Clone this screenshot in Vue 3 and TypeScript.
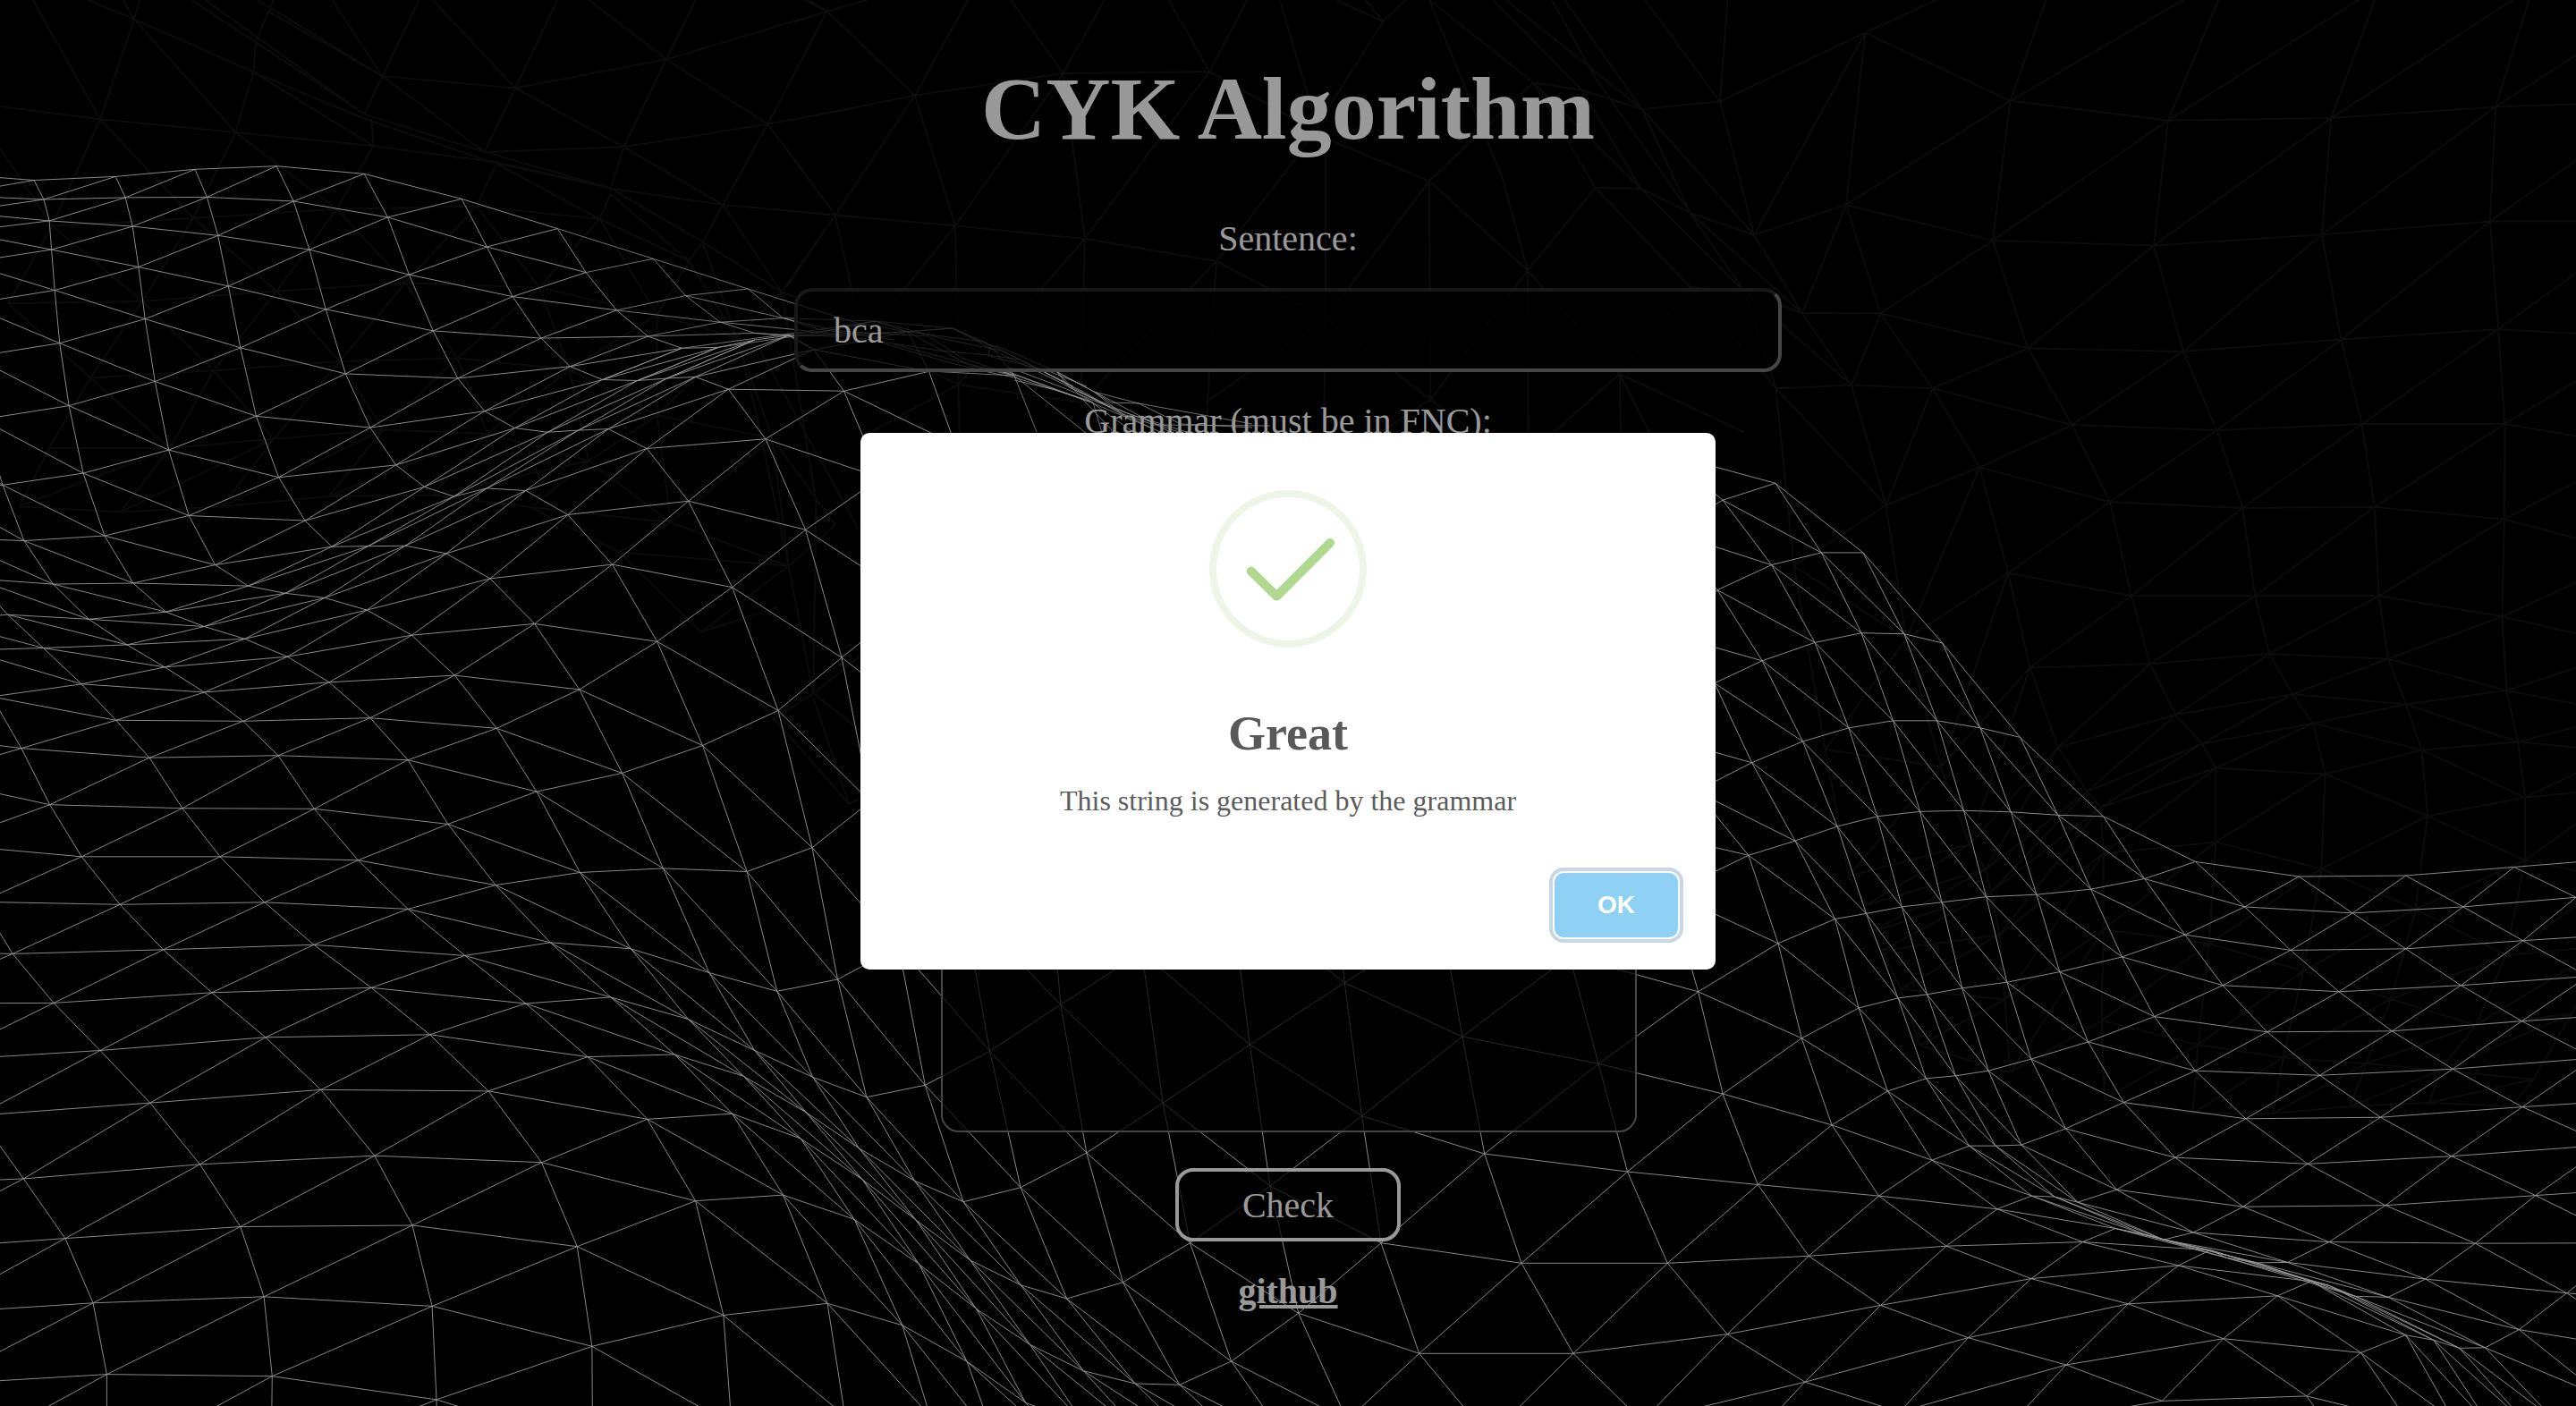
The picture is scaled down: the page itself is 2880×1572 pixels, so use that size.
<script setup lang="ts">
import { ref } from 'vue'

type Point = [number, number]
type Column = { start: number; points: Point[] }

// Each region has its own local coordinates: origin x, origin y, scale x, scale y.
const regions: Record<string, [number, number, number, number]> = {
  nw: [0, 0, 1.6333, 1.96],
  sw: [0, 780, 1.6333, 1.9798],
  ne: [1920, 0, 1.6333, 1.96],
  se: [1920, 780, 1.6333, 1.9798],
  n: [880, 0, 1.4, 3],
  s: [900, 1060, 1.4519, 3],
  f: [0, 0, 1, 1],
}

function parse(text: string): Point[] {
  let region = regions.f
  const out: Point[] = []
  for (const token of text.trim().split(/\s+/)) {
    if (regions[token]) {
      region = regions[token]
      continue
    }
    const [x, y] = token.split(',').map(Number)
    out.push([region[0] + x / region[2], region[1] + y / region[3]])
  }
  return out
}

function column(start: number, text: string): Column {
  return { start, points: parse(text) }
}

function segment(a: Point, b: Point): string {
  return `M${a[0].toFixed(1)} ${a[1].toFixed(1)}L${b[0].toFixed(1)} ${b[1].toFixed(1)}`
}

// Triangulated grid: down each column, across to the next one, and up-right diagonals.
function mesh(columns: Column[]): string {
  const at = (c: number, r: number): Point | undefined => columns[c]?.points[r - columns[c].start]
  let d = ''
  columns.forEach((col, c) => {
    col.points.forEach((p, i) => {
      const r = col.start + i
      for (const q of [at(c, r + 1), at(c + 1, r), at(c + 1, r - 1)]) {
        if (q) d += segment(p, q)
      }
    })
  })
  return d
}

function lines(list: string[]): string {
  return list.map((text) => 'M' + parse(text).map((p) => `${p[0].toFixed(1)} ${p[1].toFixed(1)}`).join('L')).join('')
}

const near = mesh([
  column(24, 'sw -280,1082 -210,1225 -130,1363 -115,1520 -110,1700'),
  column(20, 'sw -250,560 -190,677 -115,803 -40,925 43,1065 119,1197 170,1340 195,1498 195,1700'),
  column(16, 'sw -180,80 -140,176 -108,324 -35,452 23,567 98,676 183,781 274,897 365,1033 439,1171 482,1326 497,1502 495,1700'),
  column(13, 'nw -110,1360 -60,1425 sw -15,-2 39,112 91,237 149,352 219,458 298,558 387,653 485,752 586,868 684,1014 753,1168 789,1347 797,1554 800,1760'),
  column(8, 'nw -160,940 -130,1068 -92,1179 -46,1268 14,1347 79,1420 149,1499 sw 212,50 273,133 333,245 402,352 483,453 573,547 678,642 785,746 892,871 989,1029 1054,1215 1081,1436 1082,1660'),
  column(0, 'nw -105,380 -96,428 -80,465 -74,508 -64,576 -60,667 -48,782 -33,919 5,1063 44,1185 97,1280 162,1357 232,1413 301,1462 373,1517 sw 444,52 508,128 574,246 654,360 745,468 849,571 960,677 1073,795 1182,933 1270,1114 1321,1367 1336,1610'),
  column(0, 'nw 62,395 80,437 90,484 94,547 100,636 109,752 126,889 152,1037 191,1174 243,1278 303,1341 373,1373 447,1400 525,1439 601,1495 sw 676,45 745,138 818,280 905,415 1005,542 1115,663 1232,790 1337,921 1430,1101 1511,1341 1543,1590'),
  column(0, 'nw 211,387 229,433 242,496 253,585 265,699 283,836 308,986 345,1130 393,1238 453,1284 521,1300 593,1310 670,1337 752,1392 830,1480 sw 907,68 980,208 1059,387 1152,556 1257,712 1358,838 1462,976 s 80,910 158,1265 203,1570'),
  column(0, 'nw 356,371 378,432 398,516 417,627 439,762 468,912 509,1046 557,1141 606,1198 672,1197 740,1196 815,1213 895,1268 976,1367 1058,1511 sw 1136,167 1211,378 1295,609 1378,781 1472,918 s 93,776 185,1060 263,1387 310,1660'),
  column(0, 'nw 505,364 536,441 565,547 595,678 631,819 676,937 723,1019 775,1067 829,1088 889,1070 960,1075 1037,1128 1118,1237 1200,1406 sw 1283,106 1364,385 1419,650 1484,840 s 88,672 180,912 278,1210 358,1525 430,1700'),
  column(0, 'nw 665,381 708,476 747,602 791,725 836,829 885,901 940,938 1000,947 1056,943 1111,940 1181,983 1257,1098 1337,1287 1421,1557 sw 1483,332 s 53,105 100,500 178,781 268,1047 365,1330 455,1600'),
  column(0, 'nw 843,436 889,541 936,650 988,741 1041,803 1100,832 1164,834 1218,829 1270,826 1330,853 1398,962 1471,1161 1537,1441 sw 1589,230 s 152,-4 195,460 257,851 350,1130 452,1418 550,1640'),
  column(0, 'nw 1018,501 1070,597 1126,680 1183,737 1245,763 1312,761 1378,745 1440,735 1486,766 1541,857 1608,1047 1668,1316 1720,1610 s 257,-150 300,346 350,803 425,1176 536,1461 640,1670'),
  column(8, 'n 222,1246 263,1491 f 1110,590 1145,770 s 395,-290 415,190 457,687 516,1121 608,1465 720,1680'),
  column(12, 's 547,14 581,520 625,989 692,1386 778,1640'),
  column(11, 's 692,-173 722,324 755,798 801,1225 880,1584'),
  column(10, 's 858,-280 876,116 904,563 935,989 997,1360 1110,1640'),
  column(10, 's 1034,-89 1067,297 1103,690 1163,1057 1247,1360 1359,1587 se 100,1592'),
  column(10, 's 1241,27 1288,388 1335,750 1400,1057 1497,1295 se 160,1515 333,1581 530,1615'),
  column(8, 'se -150,290 -86,433 -35,651 10,877 74,1078 167,1236 298,1345 458,1417 637,1477 812,1557'),
  column(6, 'se -110,85 -39,207 57,349 111,544 154,754 209,946 295,1103 418,1214 573,1286 750,1342 924,1419 1076,1546 1120,1620'),
  column(4, 'ne -80,1393 -5,1497 se 63,144 142,317 215,490 258,687 311,871 392,1024 511,1132 667,1205 842,1257 1023,1324 1175,1450 1260,1600'),
  column(2, 'ne -90,1165 0,1293 82,1448 se 156,97 219,285 272,478 330,665 381,843 460,992 574,1103 727,1175 900,1223 1084,1292 1257,1411 1345,1600'),
  column(0, 'ne -90,995 10,1096 99,1238 178,1408 se 240,67 292,263 337,463 383,657 435,837 508,992 616,1105 780,1188 930,1240 1118,1302 1308,1422 1410,1610'),
  column(0, 'ne 106,1059 190,1211 263,1387 se 321,51 370,252 410,453 447,643 495,826 555,990 658,1117 815,1200 985,1251 1165,1325 1355,1440 1480,1610'),
  column(0, 'ne 266,1211 341,1389 se 401,51 450,250 491,441 529,630 573,800 636,954 729,1089 869,1184 1041,1250 1225,1327 1402,1439 1530,1600'),
  column(0, 'ne 411,1409 se 480,67 536,253 583,436 625,607 677,762 742,896 836,1018 960,1127 1117,1205 1293,1287 1464,1399 1620,1550'),
  column(0, 'se 553,88 622,260 682,424 739,574 798,706 873,826 965,932 1078,1032 1220,1124 1384,1208 1551,1318 1720,1450'),
  column(0, 'se 705,263 780,401 854,525 923,637 1004,740 1100,836 1211,929 1341,1015 1494,1102 1670,1207 1850,1350'),
  column(0, 'se 873,363 963,463 1047,559 1135,651 1232,738 1343,822 1470,906 1625,990 1770,1080'),
  column(0, 'se 1062,396 1160,477 1257,556 1358,637 1469,716 1600,798 1740,885'),
  column(0, 'se 1257,394 1362,463 1471,538 1590,617 1700,697'),
  column(0, 'se 1455,375 1568,442 1700,520'),
  column(0, 'se 1640,357'),
])

// Folded crest of the wave, running behind the sentence field and the grammar label.
const ridge = lines([
  'nw 1018,501 1193,567 1366,633 1450,665 f 958,361 1015,371',
  'nw 1070,597 1193,567 1252,648 1315,706 1378,730 1445,737 f 910,391',
  'nw 1252,648 1366,633 1430,697 f 915,368 1000,380',
  'nw 1126,680 1252,648 1430,697 f 889,359 936,370 1038,376',
  'nw 1126,680 1315,706 1430,697 f 978,359',
  'nw 1183,737 1315,706 1450,722 f 936,374',
  'nw 1183,737 1378,730 1450,735 f 936,376 1065,367',
  'nw 1245,763 1450,730 f 940,365 978,359',
  'nw 1312,761 1450,737 f 950,373 1015,371',
  'nw 1100,832 1245,763',
  'nw 1164,834 1312,761',
  'nw 1218,829 1378,745',
  'nw 1440,735 f 905,374 978,359 1065,367 1107,386 1120,389 1182,416 1223,438 1273,451 1400,474',
  'f 889,373 925,370 978,359 1060,380 1120,392 1215,440 1265,470',
  'f 978,359 1015,371 1038.6,415',
  'f 1015,371 1065,367 1120,396 1180,425 1290,480',
  'f 1015,371 1100,382 1160,412 1240,455',
  'f 910,391 960,382 1015,371',
  'f 960,378 1050,392 1105,397 1140,402 1200,432',
  'f 985,383 1060,405 1100,415 1134,422 1218,448 1268,484',
  'f 1000,385 1075,405 1134,419 1220,450 1300,484',
  'f 1015,371 1050,390 1085,409 1134,420',
  'f 1038,376 1075,400 1134,420',
  'f 1065,367 1107,386 1126,410 1134,420 1159,483',
  'f 1107,386 1105,398 1170,414 1215,432',
  'f 1038.6,415 1134,420 1214,484',
  'f 1100,415 1128,416 1210,446 1245,483',
  'f 1126,410 1190,434 1228,450 1320,484',
  'f 1182,416 1205,440 1222,450 1232,484',
  'f 1182,416 1195,433 1260,462 1330,484',
  'f 1182,416 1250,452 1310,484',
  'f 1223,438 1242,450 1273,451 1320,474 1400,478',
  'f 1223,438 1255,463 1290,475 1420,476',
  'f 1134,425 1180,436 1218,449',
])

const farGrid = [
  mesh([
    column(2, 'n 1338,366 1413,713 1499,980 ne 107,851 140,1240 se 197,115 240,395 270,460 280,520 300,560 335,645 370,770'),
    column(1, 'ne 5,222 67,515 155,686 245,844 308,1107 345,1400 se 408,153 460,325 490,380 500,430 515,525 525,668 535,830'),
    column(1, 'ne 270,72 235,449 298,687 393,851 479,1024 531,1256 571,1463 se 622,110 675,208 700,243 705,345 705,513 702,715 707,890'),
  ]),
  mesh([
    column(1, 'ne 270,72 235,449 298,687 393,851 479,1024 531,1256 571,1463 se 622,110 675,208 700,243 705,345 705,513 702,715 707,890'),
    column(0, 'ne 639,-133 535,221 503,527 567,763 648,931 717,1100 756,1306 790,1455 se 837,38 885,102 910,156 910,320 898,545 878,768 868,920'),
    column(0, 'ne 936,-60 823,264 797,538 851,770 912,943 959,1113 982,1306 1008,1433 se 1050,-8 1088,57 1110,169 1103,379 1070,605 1033,797 1015,920'),
    column(0, 'ne 1210,-30 1121,259 1104,514 1139,744 1177,929 1200,1111 1208,1306 1225,1444 se 1258,15 1286,116 1297,262 1275,468 1230,667 1185,810 1155,905'),
    column(0, 'ne 1490,-30 1421,234 1411,485 1426,721 1438,929 1437,1138 1433,1351 1441,1513 se 1462,98 1475,221 1475,360 1440,570 1385,725 1320,825 1300,897'),
    column(0, 'ne 1790,-50 1720,222 1700,485 1700,740 1690,980 1680,1215 1680,1420 1660,1565 se 1650,120 1660,200 1640,400 1620,550 1560,700 1490,845 1450,905'),
  ]),
  mesh([
    column(3, 'nw 90,982 35,1110'),
    column(1, 'nw 15,665 165,828 310,982 220,1122'),
    column(0, 'nw 95,495 260,660 390,812 500,962 405,1110'),
    column(0, 'nw 353,478 505,638 620,792 700,942 600,1088'),
    column(0, 'nw 615,458 740,620 835,785 890,950 790,1085'),
    column(0, 'nw 870,452 985,630 1040,810 1075,1010 970,1112'),
    column(0, 'nw 1095,480 1200,690 1200,910 1225,1145 1130,1210'),
    column(0, 'nw 1258,572 1345,740 1410,960 1440,1240 1280,1385'),
  ]),
].join('')

const farLines = lines([
  'nw 0,233 183,261 430,290 682,320 888,353 1115,413 1283,530 1427,640 1568,700',
  'nw 60,0 183,261 245,42 255,0',
  'nw 160,0 245,42 463,158 665,260 885,350 1110,410',
  'nw 225,0 245,42 430,290 463,158 467,93 490,25 500,0',
  'nw 350,0 467,93 665,250 885,333 1110,410 1283,530',
  'nw 375,0 665,250',
  'nw 470,0 698,167 941,193 1217,130 1510,25 1568,5',
  'nw 490,25 698,167 885,333 1139,322 1402,272 1568,235',
  'nw 665,250 698,167 765,0',
  'nw 607,0 698,167',
  'nw 790,0 941,193 1018,0',
  'nw 885,333 941,193 1139,322 1217,130 1270,0',
  'nw 1075,0 1217,130 1402,272 1510,25',
  'nw 1470,0 1510,25',
  'nw 1115,413 1139,322 1320,449 1525,471 1568,475',
  'nw 1283,530 1320,449 1402,272 1525,471 1427,640 1320,449',
  'nw 1115,413 1320,449',
  'nw 463,158 682,320 678,260',
  'nw 682,320 615,458',
  'nw 888,353 908,355 870,452',
  'nw 908,360 1095,480 1115,425 1258,572 1283,530 1345,740',
  'nw 430,290 353,478',
  'nw 0,325 95,495 183,261 353,478',
  'nw 430,290 615,458',
  'nw 1427,640 1450,800 1490,1100 1485,1520',
  'nw 1427,640 1345,740 1380,900 1440,1240 1485,1520 1568,1440',
  'nw 1410,960 1525,1150 1440,1240',
  'nw 1380,750 1568,1160',
  'nw 1130,1210 1280,1385 1420,1330',
  'sw 1380,0 1550,235 1568,225',
  'sw 1410,50 1485,-10 1568,70',
  'sw 1485,0 1550,235',
  'n 0,405 200,320 432,246 661,240 860,480 1005,607 1159,907 1303,1255 1350,1450',
  'n 0,80 63,38 125,0',
  'n 35,0 63,38 200,320 283,0',
  'n 350,0 432,246 497,0',
  'n 597,0 661,240 720,0',
  'n 860,0 933,72 968,0',
  'n 905,0 933,72',
  'n 0,500 75,722 200,320 263,757 432,246 466,801 661,240',
  'n 0,707 75,722 263,757 466,801 672,876 843,1068 1007,1340',
  'n 672,876 800,520 933,72',
  'n 771,0 843,520 843,1068 1005,607 1007,1340 1159,907 1160,1450',
  'n 1005,607 1168,277 1244,302 1338,366',
  'n 1159,907 1265,630 1336,632 1413,713',
  'n 1303,1255 1413,962 1499,980',
  'n 1005,0 1168,277 1265,630 1413,962 1548,1302',
  'n 1005,0 1120,600 1159,907',
  'n 1105,0 1244,302 1336,632 1499,980',
  'n 1125,0 1338,366',
  'n 1168,277 1336,632',
  'n 1197,0 1265,260 1413,713',
  'n 1217,0 1338,366 1513,787',
  'n 1343,0 1460,342',
  'n 1472,0 1460,342',
  'n 0,960 75,722 100,960 120,1140 268,1290 270,1450',
  'n 120,1140 263,757 265,965 268,1290 466,801 464,965 460,1350',
  'n 130,1450 268,1290 460,1350 672,876 655,1450',
  'n 655,1350 843,1068 840,1450',
  'n 1303,1255 1305,1450',
  'n 930,1450 1007,1340 1075,1450',
  'n 1548,1302 1568,1300',
  'n 1200,1450 1303,1255 1499,1450',
])

const far = farGrid + farLines
const sentence = ref('bca')
const grammar = ref('')
</script>

<template>
  <div class="page">
    <svg class="backdrop" viewBox="0 0 2880 1572" aria-hidden="true">
      <path class="far" :d="far" />
      <path class="near" :d="near" />
      <path class="near ridge" :d="ridge" />
    </svg>

    <main class="content">
      <h1>CYK Algorithm</h1>
      <label class="label" for="sentence">Sentence:</label>
      <input id="sentence" v-model="sentence" class="sentence" type="text" />
      <label class="label grammar-label" for="grammar">Grammar (must be in FNC):</label>
      <textarea id="grammar" v-model="grammar" class="grammar"></textarea>
      <button class="check" type="button">Check</button>
      <a class="github" href="#">github</a>
    </main>

    <div class="overlay">
      <section class="modal" role="dialog">
        <svg class="icon" viewBox="0 0 176 176">
          <circle cx="88" cy="88" r="84" />
          <path d="M46.7 90.6L75.3 118.6L135 59" />
        </svg>
        <h2>Great</h2>
        <p>This string is generated by the grammar</p>
        <footer>
          <button class="ok" type="button">OK</button>
        </footer>
      </section>
    </div>
  </div>
</template>

<style>
body {
  background: #000;
  overflow: hidden;
}
</style>

<style scoped>
.page {
  position: relative;
  width: 2880px;
  height: 1572px;
  overflow: hidden;
  background: #000;
  color: #fff;
  font-family: "Liberation Serif", "Times New Roman", serif;
}

.backdrop {
  position: absolute;
  inset: 0;
  width: 2880px;
  height: 1572px;
}

.backdrop path {
  fill: none;
}

.far {
  stroke: #131313;
  stroke-width: 2;
}

.near {
  stroke: rgba(255, 255, 255, 0.88);
  stroke-width: 1;
}

.near.ridge {
  stroke: rgba(255, 255, 255, 0.72);
}

.content {
  position: relative;
  display: flex;
  flex-direction: column;
  align-items: center;
  padding-top: 64px;
}

h1 {
  margin: 0 0 64px;
  font-size: 100px;
  line-height: 116px;
  font-weight: 700;
}

.label {
  font-size: 40px;
  line-height: 46px;
}

.sentence,
.grammar,
.check {
  box-sizing: border-box;
  border-radius: 20px;
  background: rgba(0, 0, 0, 0.7);
  color: #fff;
  font-family: inherit;
  font-size: 40px;
  outline: none;
}

.sentence {
  width: 1104px;
  height: 94px;
  margin-top: 32px;
  padding: 0 40px;
  border: 4px solid;
  border-color: #292929 #767676 #767676 #292929;
}

.grammar-label {
  margin-top: 32px;
}

.grammar {
  width: 778px;
  height: 740px;
  margin-top: 32px;
  margin-left: 2px;
  border: 2px solid #767676;
  resize: none;
}

.check {
  width: 252px;
  height: 82px;
  margin-top: 40px;
  padding: 0;
  border: 4px solid #fff;
}

.github {
  margin-top: 33px;
  color: #fff;
  font-size: 40px;
  line-height: 46px;
  font-weight: 700;
}

.overlay {
  position: absolute;
  inset: 0;
  display: flex;
  align-items: center;
  justify-content: center;
  padding-bottom: 4px;
  background: rgba(0, 0, 0, 0.4);
}

.modal {
  box-sizing: border-box;
  display: flex;
  flex-direction: column;
  align-items: center;
  width: 956px;
  height: 600px;
  padding-top: 64px;
  border-radius: 10px;
  background: #fff;
}

.icon {
  width: 176px;
  height: 176px;
  fill: none;
}

.icon circle {
  stroke: #eef6e7;
  stroke-width: 8;
}

.icon path {
  stroke: #b0d98f;
  stroke-width: 10;
  stroke-linecap: round;
  stroke-linejoin: round;
}

h2 {
  margin: 65px 0 0;
  color: #595959;
  font-size: 54px;
  line-height: 62px;
  font-weight: 700;
}

p {
  margin: 26px 0 0;
  color: #5c5c5c;
  font-size: 32px;
  line-height: 36px;
}

footer {
  display: flex;
  justify-content: flex-end;
  align-self: stretch;
  margin-top: 63px;
  padding-right: 42px;
}

.ok {
  width: 138px;
  height: 72px;
  padding: 0;
  border: 0;
  border-radius: 10px;
  background: #8fd0f5;
  box-shadow: 0 0 0 2px #fff, 0 0 0 6px #c8d7e6;
  color: #fff;
  font-family: "Liberation Sans", Arial, sans-serif;
  font-size: 28px;
  font-weight: 700;
}
</style>
